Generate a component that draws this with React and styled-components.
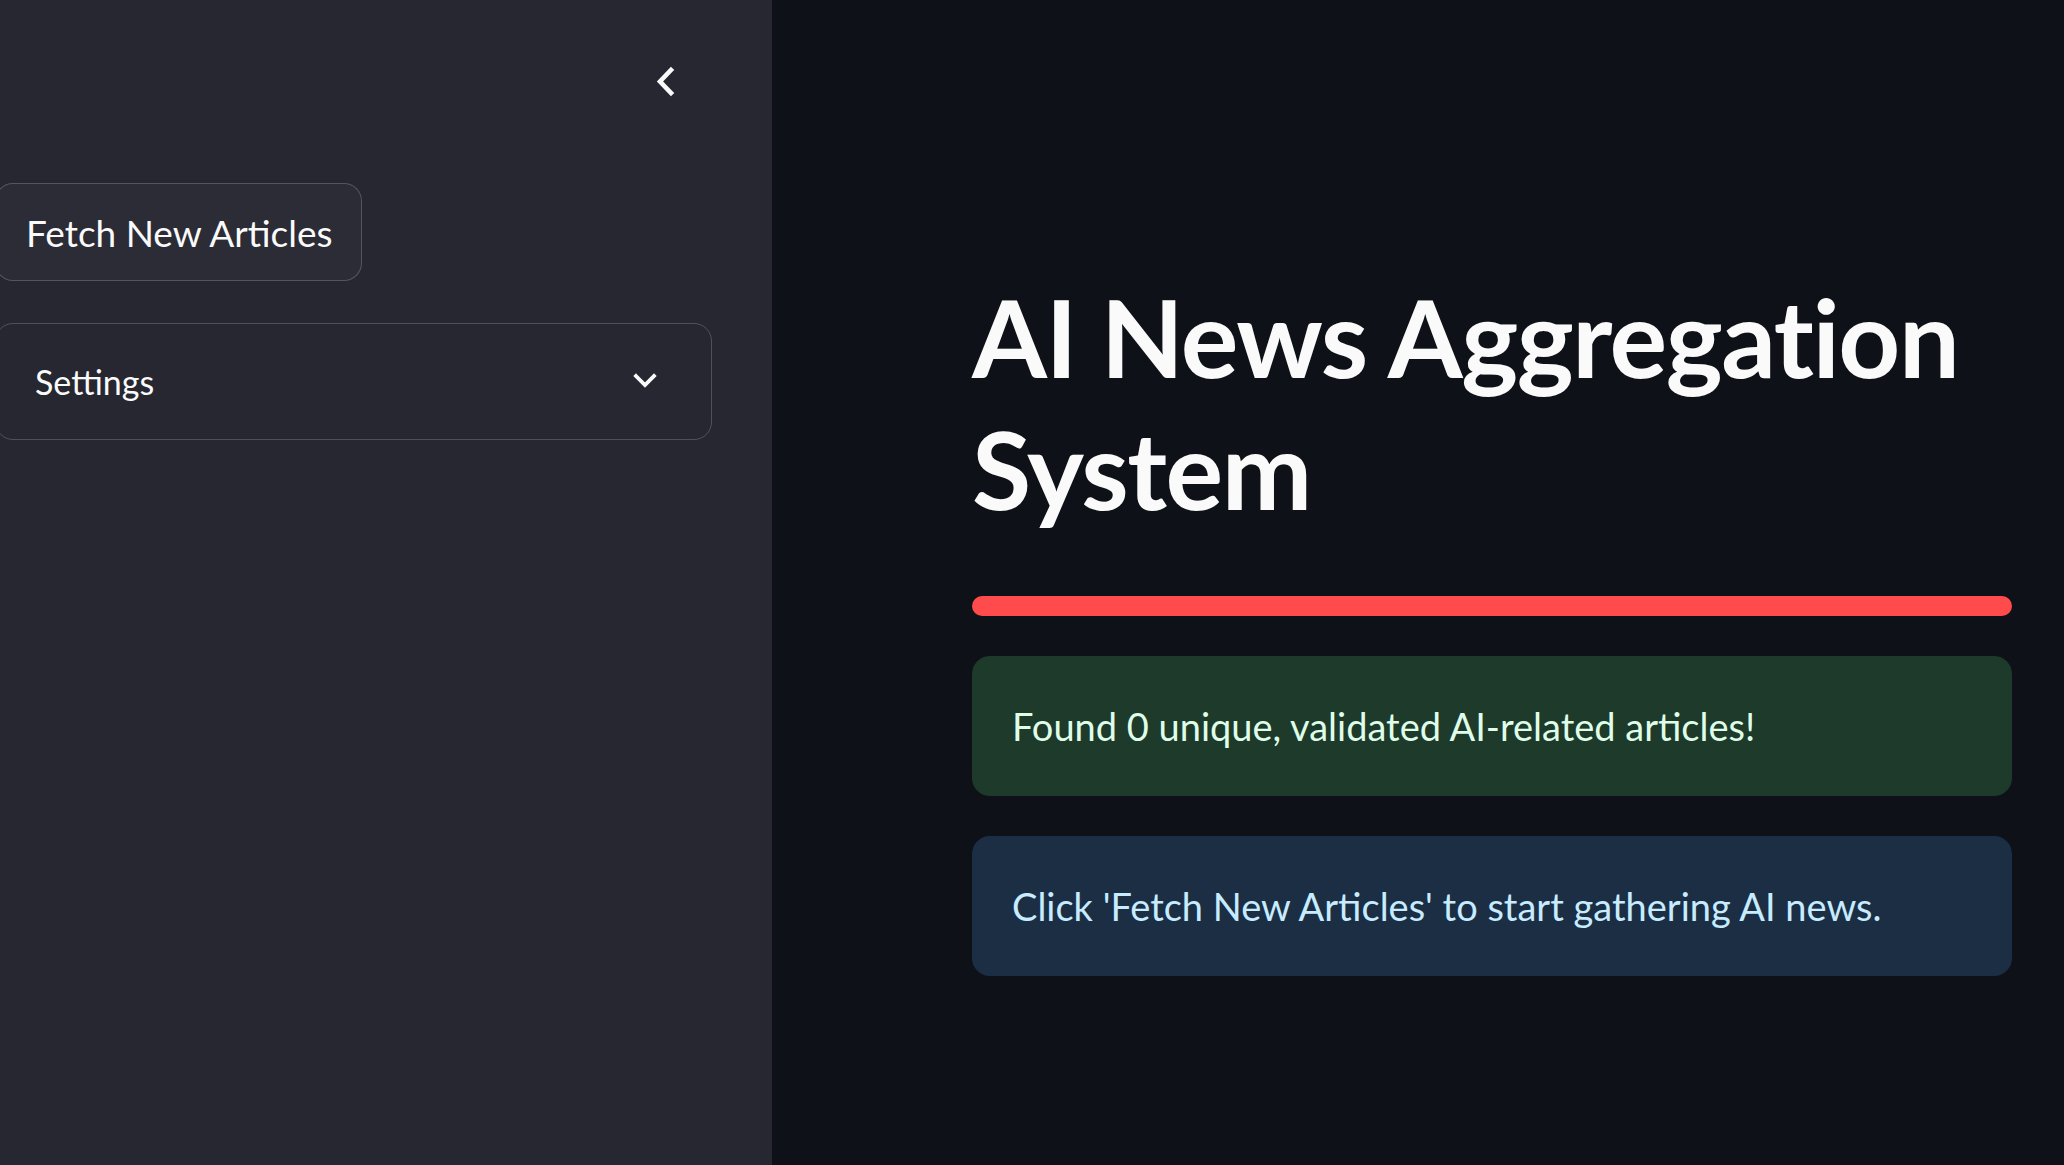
import React from "react";
import styled, { createGlobalStyle } from "styled-components";

const GlobalStyle = createGlobalStyle`
  html, body {
    margin: 0;
    padding: 0;
    background: #0e1117;
  }
  body {
    font-family: Lato, "Noto Sans", sans-serif;
    color: #fafafa;
    overflow: hidden;
  }
`;

const alerts = [
  { id: 1, kind: "success", text: "Found 0 unique, validated AI-related articles!" },
  { id: 2, kind: "info", text: "Click 'Fetch New Articles' to start gathering AI news." },
];

const ChevronLeft = () => (
  <svg width="22" height="32" viewBox="0 0 22 32" fill="none">
    <polyline
      points="16,4 5,15.5 16,27"
      stroke="#fafafa"
      strokeWidth="4.6"
      strokeLinecap="square"
      strokeLinejoin="miter"
    />
  </svg>
);

const ChevronDown = () => (
  <svg width="26" height="18" viewBox="0 0 26 18" fill="none">
    <polyline
      points="4,4 13,13 22,4"
      stroke="#fafafa"
      strokeWidth="3.8"
      strokeLinecap="square"
      strokeLinejoin="miter"
    />
  </svg>
);

const App = () => {
  return (
    <>
      <GlobalStyle />
      <Page>
        <Sidebar>
          <SidebarHeader>
            <CollapseBtn>
              <ChevronLeft />
            </CollapseBtn>
          </SidebarHeader>
          <SidebarBody>
            <FetchButton>Fetch New Articles</FetchButton>
            <Expander>
              <span>Settings</span>
              <ChevronDown />
            </Expander>
          </SidebarBody>
        </Sidebar>

        <Main>
          <Content>
            <Title>AI News Aggregation System</Title>
            <Progress />
            {alerts.map((a) => (
              <Alert key={a.id} kind={a.kind}>
                {a.text}
              </Alert>
            ))}
          </Content>
        </Main>
      </Page>
    </>
  );
};

export default App;

// --- Styled Components ---

const Page = styled.div`
  display: flex;
  width: 100vw;
  height: 100vh;
`;

const Sidebar = styled.aside`
  width: 772px;
  flex-shrink: 0;
  background: #262730;
  display: flex;
  flex-direction: column;
  overflow: hidden;
`;

const SidebarHeader = styled.div`
  height: 164px;
  display: flex;
  align-items: center;
  justify-content: flex-end;
  padding-right: 95px;
`;

const CollapseBtn = styled.div`
  display: flex;
  align-items: center;
  justify-content: center;
`;

const SidebarBody = styled.div`
  display: flex;
  flex-direction: column;
  align-items: flex-start;
  gap: 42px;
  margin-top: 19px;
  margin-left: -5px;
  width: 717px;
`;

const FetchButton = styled.button`
  height: 98px;
  padding: 0 29px 0 30px;
  background: #2b2c36;
  border: 1.5px solid rgba(250, 250, 250, 0.2);
  border-radius: 18px;
  color: #fafafa;
  font-family: inherit;
  font-size: 37px;
  font-weight: 400;
  cursor: pointer;
`;

const Expander = styled.div`
  box-sizing: border-box;
  width: 100%;
  height: 117px;
  display: flex;
  align-items: center;
  justify-content: space-between;
  padding: 0 53px 0 39px;
  border: 1.5px solid rgba(250, 250, 250, 0.2);
  border-radius: 18px;
  font-size: 34px;
  color: #fafafa;

  svg {
    margin-top: -2px;
  }
`;

const Main = styled.main`
  flex: 1;
  background: #0e1117;
  padding: 0 52px 0 200px;
`;

const Content = styled.div`
  display: flex;
  flex-direction: column;
  padding-top: 270px;
`;

const Title = styled.h1`
  margin: 0;
  font-size: 108px;
  font-weight: 700;
  line-height: 132px;
  letter-spacing: -1.5px;
  color: #fafafa;
`;

const Progress = styled.div`
  height: 20px;
  border-radius: 10px;
  background: #ff4b4b;
  margin-top: 62px;
`;

const Alert = styled.div`
  box-sizing: border-box;
  height: 140px;
  margin-top: 40px;
  padding: 0 40px;
  display: flex;
  align-items: center;
  border-radius: 18px;
  font-size: 38px;
  background: ${({ kind }) => (kind === "success" ? "#1e3a2a" : "#1b2e44")};
  color: ${({ kind }) => (kind === "success" ? "#dffde9" : "#c7ebff")};
`;
